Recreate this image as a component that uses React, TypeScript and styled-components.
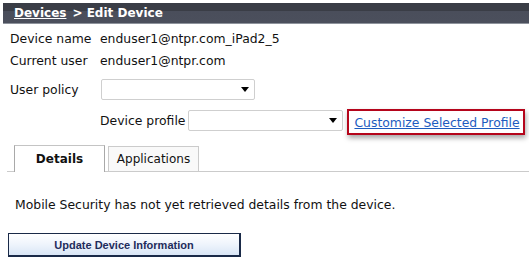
import styled, { createGlobalStyle } from "styled-components";

const GlobalStyle = createGlobalStyle`
  body {
    margin: 0;
    background: white;
    font-family: "DejaVu Sans", Verdana, sans-serif;
    color: #111;
  }
`;

const Page = styled.div`
  padding-top: 3px;
`;

const TitleBar = styled.div`
  margin-left: 3px;
  height: 20px;
  padding-left: 11px;
  background: linear-gradient(to bottom, #3a3d46 0, #3a3d46 8px, #4a4e5b 8px, #4b4f5c 100%);
  border-bottom: 1px solid #8e939c;
  color: white;
  font-size: 12px;
  font-weight: bold;
  line-height: 20px;
  white-space: nowrap;
`;

const Crumb = styled.a`
  color: white;
  text-decoration: underline;
  cursor: pointer;
`;

const Current = styled.span`
  margin-left: 6px;
`;

const Info = styled.div`
  padding-left: 10px;
  font-size: 12.4px;
`;

const Row = styled.div<{ $top?: number; $height?: number }>`
  display: flex;
  align-items: center;
  margin-top: ${(p) => p.$top ?? 0}px;
  height: ${(p) => p.$height ?? 22}px;
  white-space: nowrap;
`;

const Label = styled.span`
  width: 90px;
  flex-shrink: 0;
`;

const Value = styled.span``;

const SelectBox = styled.div<{ $width: number; $indent?: number }>`
  box-sizing: border-box;
  width: ${(p) => p.$width}px;
  height: 21px;
  margin-left: ${(p) => p.$indent ?? 0}px;
  border: 1px solid #cfcfcf;
  border-radius: 2px;
  background: white;
  display: flex;
  align-items: center;
  justify-content: flex-end;
  padding-right: 5px;
`;

const ProfileRow = styled.div`
  display: flex;
  align-items: flex-start;
  margin-top: 9px;
  padding-left: 90px;
  white-space: nowrap;
`;

const ProfileLabel = styled.span`
  line-height: 21px;
  margin-top: 1px;
  margin-right: 3px;
`;

const ProfileSelect = styled(SelectBox)`
  margin-top: 1px;
`;

const Highlight = styled.div`
  margin-left: 4px;
  height: 26px;
  box-sizing: border-box;
  border: 2px solid #b5051b;
  padding: 0 3px 0 5px;
  box-shadow: 1px 3px 5px rgba(0, 0, 0, 0.35);
  display: flex;
  align-items: center;
`;

const Link = styled.a`
  color: #1d5cc0;
  text-decoration: underline;
  cursor: pointer;
`;

const TabBar = styled.div`
  margin: 10px 0 0 7px;
  padding-left: 7px;
  display: flex;
  align-items: flex-end;
  gap: 3px;
  height: 26px;
  border-bottom: 1px solid #cbcbcb;
`;

const Tab = styled.div<{ $active?: boolean }>`
  box-sizing: border-box;
  width: 91px;
  height: ${(p) => (p.$active ? 27 : 25)}px;
  margin-bottom: ${(p) => (p.$active ? -1 : 0)}px;
  border: 1px solid ${(p) => (p.$active ? "#a9a9a9" : "#cbcbcb")};
  border-top-color: ${(p) => (p.$active ? "#c4c4c4" : "#cbcbcb")};
  border-bottom: none;
  background: ${(p) => (p.$active ? "white" : "#f9f9f9")};
  font-size: 12px;
  font-weight: ${(p) => (p.$active ? "bold" : "normal")};
  display: flex;
  align-items: center;
  justify-content: center;
  padding-bottom: ${(p) => (p.$active ? 0 : 1)}px;
`;

const Message = styled.p`
  margin: 23px 0 0 15px;
  font-size: 12.4px;
  line-height: 20px;
  white-space: nowrap;
`;

const UpdateButton = styled.button`
  display: block;
  margin: 18px 0 0 8px;
  width: 233px;
  height: 24px;
  box-sizing: border-box;
  border: 1px solid #1a2a48;
  border-right-width: 2px;
  border-bottom-width: 2px;
  background: linear-gradient(to bottom, #ffffff 0%, #eef4fc 50%, #d9e6f6 100%);
  color: #1f2d5c;
  font-family: "Liberation Sans", Arial, sans-serif;
  font-size: 11px;
  font-weight: bold;
  padding: 0;
  cursor: pointer;
`;

function Caret() {
  return (
    <svg width="8" height="5" viewBox="0 0 8 5">
      <path d="M0 0 H8 L4 5 Z" fill="#000" />
    </svg>
  );
}

export default function App() {
  return (
    <Page>
      <GlobalStyle />
      <TitleBar>
        <Crumb>Devices</Crumb>
        <Current>&gt; Edit Device</Current>
      </TitleBar>
      <Info>
        <Row $top={3}>
          <Label>Device name</Label>
          <Value>enduser1@ntpr.com_iPad2_5</Value>
        </Row>
        <Row>
          <Label>Current user</Label>
          <Value>enduser1@ntpr.com</Value>
        </Row>
        <Row $top={8} $height={21}>
          <Label>User policy</Label>
          <SelectBox $width={154} $indent={1}>
            <Caret />
          </SelectBox>
        </Row>
        <ProfileRow>
          <ProfileLabel>Device profile</ProfileLabel>
          <ProfileSelect $width={155}>
            <Caret />
          </ProfileSelect>
          <Highlight>
            <Link>Customize Selected Profile</Link>
          </Highlight>
        </ProfileRow>
      </Info>
      <TabBar>
        <Tab $active>Details</Tab>
        <Tab>Applications</Tab>
      </TabBar>
      <Message>Mobile Security has not yet retrieved details from the device.</Message>
      <UpdateButton>Update Device Information</UpdateButton>
    </Page>
  );
}
